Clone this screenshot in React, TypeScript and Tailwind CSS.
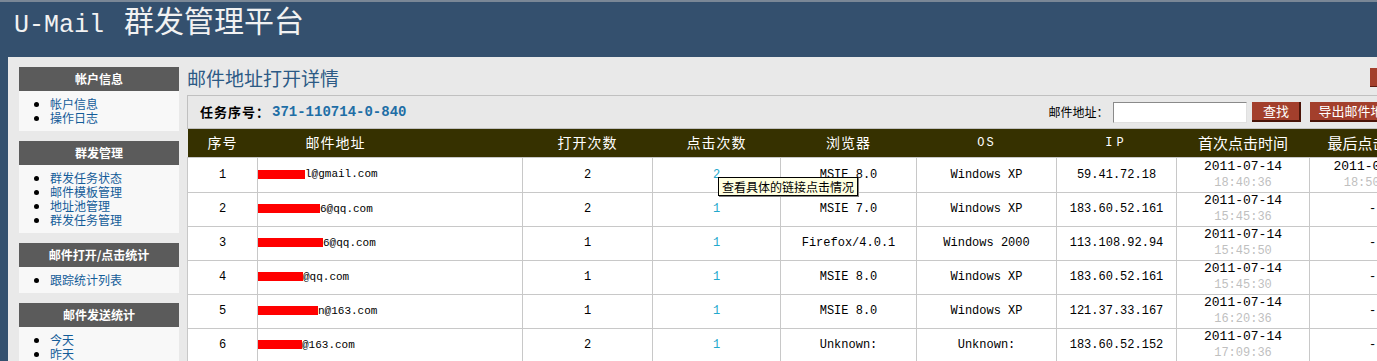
import React from "react";

const CJK = "font-['Noto_Sans_CJK_SC','Noto_Sans',sans-serif]";
const MONO = "font-['Liberation_Mono','Noto_Sans_CJK_SC',monospace]";

type Row = {
  n: string;
  bar: number;
  email: string;
  open: string;
  click: string;
  browser: string;
  os: string;
  ip: string;
  date: string;
  time: string;
  last?: { date: string; time: string };
};

const rows: Row[] = [
  { n: "1", bar: 47, email: "l@gmail.com", open: "2", click: "2", browser: "MSIE 8.0", os: "Windows XP", ip: "59.41.72.18", date: "2011-07-14", time: "18:40:36", last: { date: "2011-07-14", time: "18:50:36" } },
  { n: "2", bar: 62, email: "6@qq.com", open: "2", click: "1", browser: "MSIE 7.0", os: "Windows XP", ip: "183.60.52.161", date: "2011-07-14", time: "15:45:36" },
  { n: "3", bar: 65, email: "6@qq.com", open: "1", click: "1", browser: "Firefox/4.0.1", os: "Windows 2000", ip: "113.108.92.94", date: "2011-07-14", time: "15:45:50" },
  { n: "4", bar: 45, email: "@qq.com", open: "1", click: "1", browser: "MSIE 8.0", os: "Windows XP", ip: "183.60.52.161", date: "2011-07-14", time: "15:45:30" },
  { n: "5", bar: 60, email: "n@163.com", open: "1", click: "1", browser: "MSIE 8.0", os: "Windows XP", ip: "121.37.33.167", date: "2011-07-14", time: "16:20:36" },
  { n: "6", bar: 44, email: "@163.com", open: "2", click: "1", browser: "Unknown:", os: "Unknown:", ip: "183.60.52.152", date: "2011-07-14", time: "17:09:36" },
];

const sideBoxes: { title: string; items: string[] }[] = [
  { title: "帐户信息", items: ["帐户信息", "操作日志"] },
  { title: "群发管理", items: ["群发任务状态", "邮件模板管理", "地址池管理", "群发任务管理"] },
  { title: "邮件打开/点击统计", items: ["跟踪统计列表"] },
  { title: "邮件发送统计", items: ["今天", "昨天"] },
];

function SideBox({ title, items }: { title: string; items: string[] }) {
  return (
    <div className="w-[160px] mb-[10px]">
      <div className={`h-[24px] bg-[#5b5b5b] text-white text-[12px] leading-[14px] font-bold flex items-center justify-center ${CJK}`}>
        {title}
      </div>
      <ul className="bg-[#f8f8f8] pt-[6px] pb-[6px]">
        {items.map((it) => (
          <li key={it} className={`flex items-center h-[14px] leading-[14px] text-[12px] text-[#145c98] ${CJK}`}>
            <span className="ml-[15px] mr-[11px] w-[5px] h-[5px] rounded-full bg-black inline-block" />
            {it}
          </li>
        ))}
      </ul>
    </div>
  );
}

export default function App() {
  const td = "border border-[#c8c8c8] text-center align-middle";
  return (
    <div className="w-[1377px] h-[361px] overflow-hidden bg-[#34506e] relative">
      {/* header */}
      <div className="h-[57px] border-t-2 border-[#7a8796] flex items-start pl-[14px]">
        <div className="flex items-baseline text-[#f2f2f2] leading-[34px]">
          <span className={`text-[25px] ${MONO}`}>U-Mail</span>
          <span className={`text-[30px] ml-[20px] ${CJK}`}>群发管理平台</span>
        </div>
      </div>

      {/* body */}
      <div className="ml-[8px] bg-[#e9e9e9] flex h-[304px]">
        {/* sidebar */}
        <div className="pl-[11px] pt-[10px] w-[171px] shrink-0">
          {sideBoxes.map((b) => (
            <SideBox key={b.title} title={b.title} items={b.items} />
          ))}
        </div>

        {/* main */}
        <div className="ml-[8px] w-[1260px] shrink-0">
          <div className="h-[38px] w-[1203px] flex items-start justify-between">
            <span className={`mt-[8px] text-[19px] leading-[26px] text-[#2c5a85] ${CJK}`}>邮件地址打开详情</span>
            <span className="mt-[11px] w-[20px] h-[19px] bg-[#a33f2c] border-b border-r border-[#5a1a10]" />
          </div>

          <div className="h-[34px] border border-[#c0c0c0] bg-[#e8e8e8] flex items-center">
            <span className={`ml-[12px] text-[13px] font-bold text-black tracking-[1px] ${CJK}`}>任务序号：</span>
            <span className={`ml-[2px] text-[14px] font-bold text-[#1e6ea6] ${MONO}`}>371-110714-0-840</span>
            <span className={`ml-[642px] text-[12px] text-black ${CJK}`}>邮件地址：</span>
            <span className="ml-[5px] w-[134px] h-[21px] bg-white border border-t-[#8a8a8a] border-l-[#8a8a8a] border-r-[#e0e0e0] border-b-[#e0e0e0]" />
            <span className={`ml-[5px] w-[49px] h-[20px] bg-[#a33f2c] border-b-2 border-r-2 border-[#4a1408] text-white text-[13px] flex items-center justify-center ${CJK}`}>查找</span>
            <span className={`ml-[9px] w-[100px] h-[20px] bg-[#a33f2c] border-b-2 border-r-2 border-[#4a1408] text-white text-[13px] flex items-center pl-[8px] whitespace-nowrap ${CJK}`}>导出邮件地址</span>
          </div>

          <table className="table-fixed border-collapse w-[1248px]">
            <colgroup>
              <col className="w-[70px]" />
              <col className="w-[265px]" />
              <col className="w-[130px]" />
              <col className="w-[128px]" />
              <col className="w-[136px]" />
              <col className="w-[140px]" />
              <col className="w-[120px]" />
              <col className="w-[133px]" />
              <col className="w-[126px]" />
            </colgroup>
            <thead>
              <tr className={`h-[28px] bg-[#363100] text-white text-[14px] ${CJK}`}>
                <th className="font-normal tracking-[1px]">序号</th>
                <th className="font-normal text-left pl-[48px] tracking-[1px]">邮件地址</th>
                <th className="font-normal tracking-[1px]">打开次数</th>
                <th className="font-normal tracking-[1px]">点击次数</th>
                <th className="font-normal tracking-[1px]">浏览器</th>
                <th className={`font-normal text-[12px] tracking-[2px] ${MONO}`}>OS</th>
                <th className={`font-normal text-[12px] tracking-[4px] ${MONO}`}>IP</th>
                <th className="font-normal text-[15px] whitespace-nowrap">首次点击时间</th>
                <th className="font-normal text-[15px] whitespace-nowrap">最后点击时间</th>
              </tr>
            </thead>
            <tbody className={`text-[12px] text-black ${MONO}`}>
              {rows.map((r, i) => (
                <tr key={r.n} className={`bg-white ${i === 0 ? "h-[35px]" : "h-[34px]"}`}>
                  <td className={td}>{r.n}</td>
                  <td className="border border-[#c8c8c8] align-middle text-left text-[11px] whitespace-nowrap">
                    <span className="inline-block align-middle h-[9px] bg-[#ff0000]" style={{ width: r.bar }} />
                    <span className="align-middle">{r.email}</span>
                  </td>
                  <td className={td}>{r.open}</td>
                  <td className={`${td} relative text-[#22a8cc]`}>
                    {r.click}
                    {i === 0 && (
                      <div className={`absolute left-[65px] top-[19px] z-10 h-[19px] px-[3px] bg-[#ffffe1] border border-black text-black text-[12px] leading-[17px] whitespace-nowrap shadow-[1px_1px_0_#808080] ${CJK}`}>
                        查看具体的链接点击情况
                      </div>
                    )}
                  </td>
                  <td className={`${td} whitespace-nowrap`}>{r.browser}</td>
                  <td className={`${td} whitespace-nowrap`}>{r.os}</td>
                  <td className={`${td} whitespace-nowrap`}>{r.ip}</td>
                  <td className={td}>
                    <div className="text-[13px] leading-[16px]">{r.date}</div>
                    <div className="text-[12px] leading-[16px] text-[#bfbfbf]">{r.time}</div>
                  </td>
                  <td className={td}>
                    {r.last ? (
                      <>
                        <div className="text-[13px] leading-[16px]">{r.last.date}</div>
                        <div className="text-[12px] leading-[16px] text-[#bfbfbf]">{r.last.time}</div>
                      </>
                    ) : (
                      "-"
                    )}
                  </td>
                </tr>
              ))}
            </tbody>
          </table>
        </div>
      </div>
    </div>
  );
}
